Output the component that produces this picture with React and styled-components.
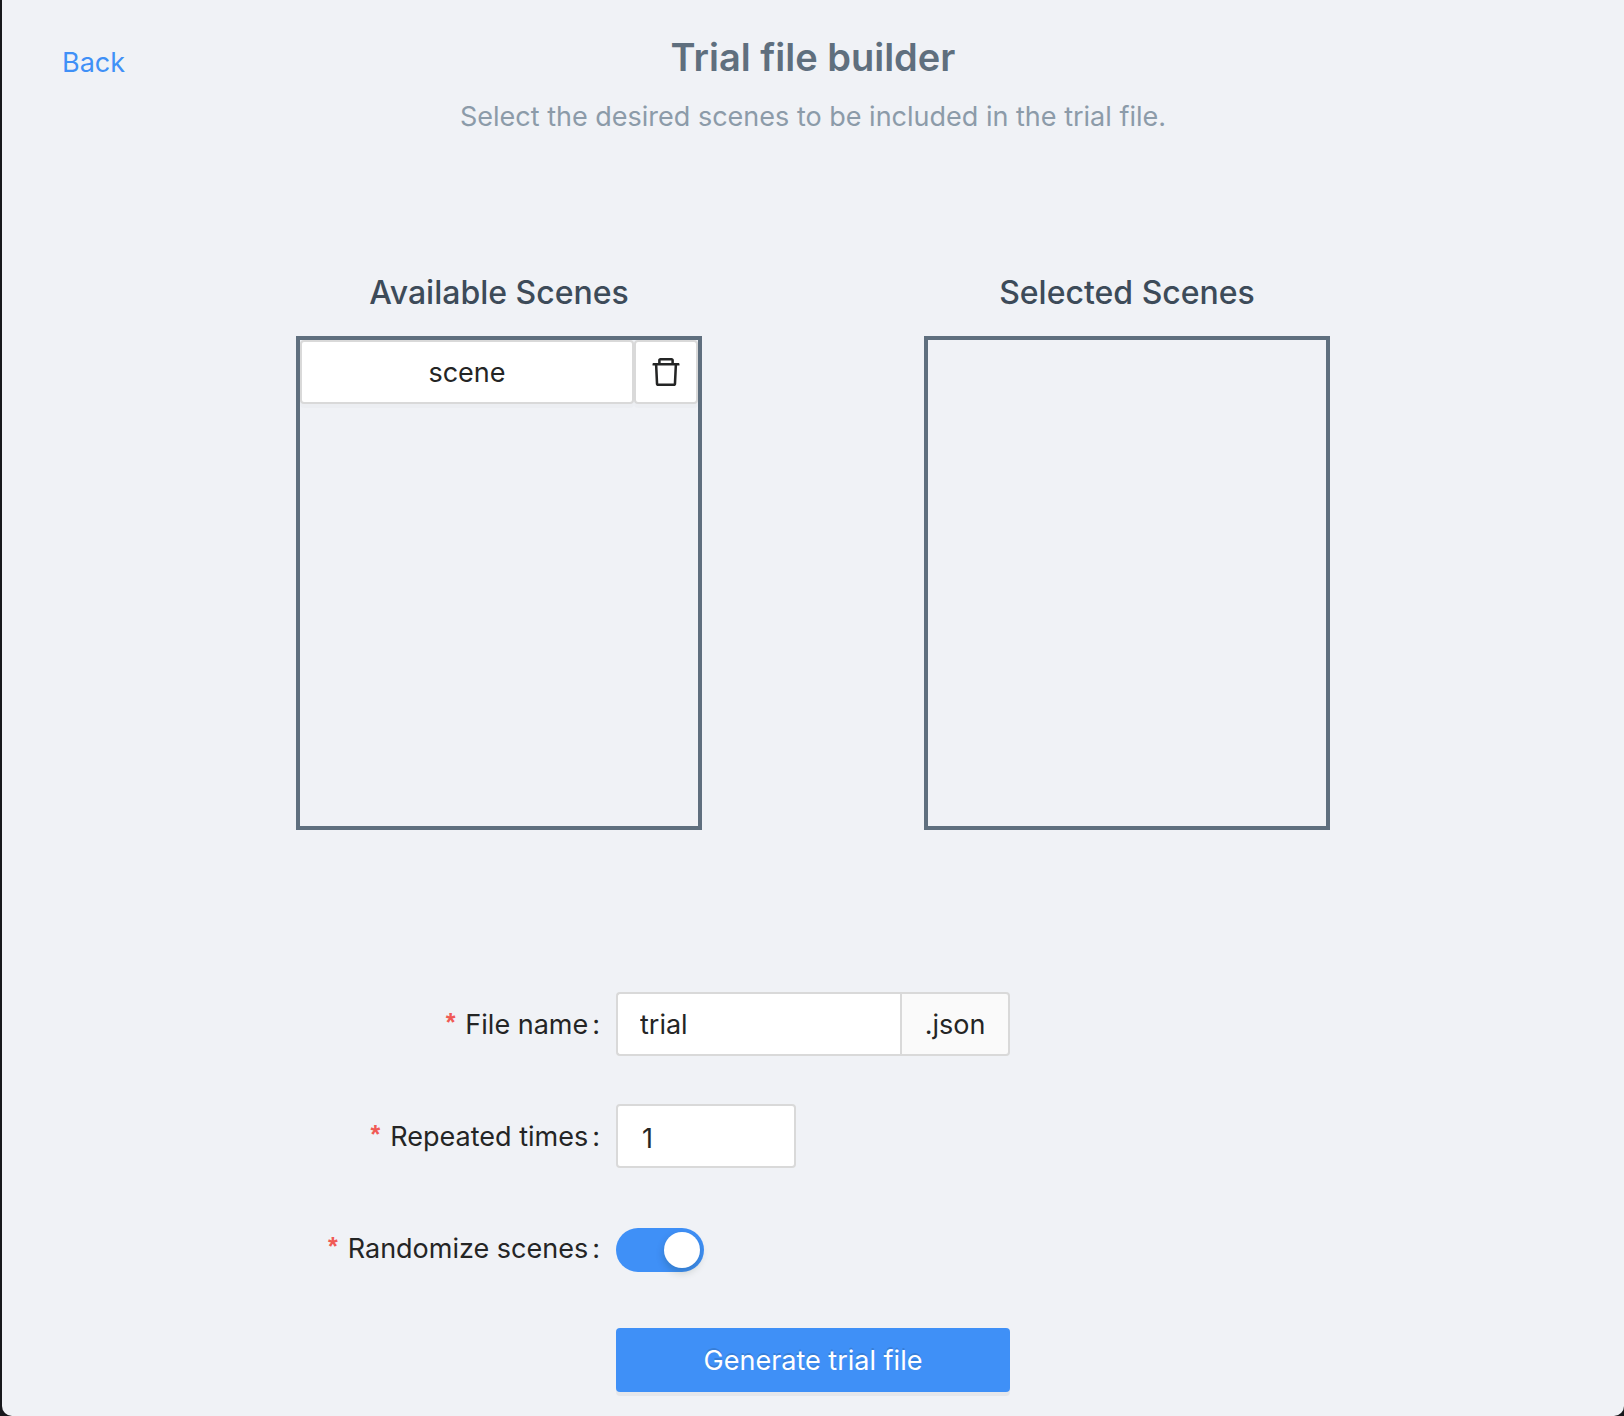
import React, { useState } from "react";
import styled, { createGlobalStyle } from "styled-components";
import { AiOutlineDelete } from "react-icons/ai";

const colors = {
  primary: "#3f90f7",
  slate: "#5f6f7e",
  heading: "#3d4b59",
  muted: "#8c9ba9",
  text: "#242525",
  border: "#d9d9d9",
  page: "#f0f2f6",
  required: "#f05a55",
};

const GlobalStyle = createGlobalStyle`
  *, *::before, *::after { box-sizing: border-box; }
  body {
    margin: 0;
    background: #17181c;
    color: ${colors.text};
    font-family: Inter, "Liberation Sans", sans-serif;
    font-size: 27px;
    line-height: 44px;
  }
  button, input { font: inherit; color: inherit; }
`;

const Page = styled.div`
  min-height: 100vh;
  margin-left: 2px;
  padding-bottom: 24px;
  background: ${colors.page};
  border-radius: 0 0 10px 10px;
`;

const Header = styled.header`
  display: grid;
  grid-template-columns: 1fr auto 1fr;
  padding: 32px 60px 0;
  text-align: center;
`;

const BackLink = styled.a`
  justify-self: start;
  padding-top: 9px;
  color: ${colors.primary};
  text-decoration: none;
`;

const Title = styled.h1`
  margin: 0;
  color: ${colors.slate};
  font-size: 38px;
  font-weight: 600;
  line-height: 50px;
`;

const Subtitle = styled.p`
  margin: 13px 0 0;
  color: ${colors.muted};
`;

const Columns = styled.main`
  display: flex;
  justify-content: center;
  gap: 222px;
  padding: 132px 24px 0;
`;

const Column = styled.section`
  flex: 0 1 406px;
`;

const ColumnTitle = styled.h2`
  margin: 0 0 21px;
  color: ${colors.heading};
  font-size: 32px;
  font-weight: 500;
  line-height: 44px;
  text-align: center;
`;

const SceneList = styled.ul`
  height: 494px;
  margin: 0;
  padding: 0;
  border: 4px solid ${colors.slate};
  list-style: none;
`;

const SceneItem = styled.li`
  display: flex;
`;

const SceneButton = styled.button`
  flex: 1;
  display: flex;
  align-items: center;
  justify-content: center;
  height: 64px;
  padding: 2px 0 0;
  border: 2px solid ${colors.border};
  border-radius: 4px;
  background: #fff;
  box-shadow: 0 4px 0 rgba(0, 0, 0, 0.016);
`;

const DeleteButton = styled(SceneButton)`
  flex: 0 0 64px;
  padding: 0;
`;

const Form = styled.form`
  display: grid;
  gap: 48px;
  padding-top: 162px;
`;

const Field = styled.div`
  display: grid;
  grid-template-columns: 1fr 394px 1fr;
  align-items: center;
  min-height: 64px;
`;

const Label = styled.label`
  padding: 2px 16px 0 0;
  text-align: right;

  &::before {
    content: "*";
    margin-right: 10px;
    color: ${colors.required};
    font-family: "Liberation Sans", sans-serif;
    font-size: 25px;
    font-weight: 700;
    line-height: 1;
    vertical-align: 3px;
  }

  &::after {
    content: ":";
    margin-left: 4px;
  }
`;

const InputGroup = styled.div`
  display: flex;
`;

const TextInput = styled.input`
  flex: 1;
  min-width: 0;
  height: 64px;
  padding: 0 22px;
  border: 2px solid ${colors.border};
  border-right-width: ${(p) => (p.$joined ? 0 : "2px")};
  border-radius: ${(p) => (p.$joined ? "4px 0 0 4px" : "4px")};
  background: #fff;
  outline: none;
`;

const CountInput = styled(TextInput)`
  flex: 0 0 180px;
  padding: 4px 24px 0;
`;

const Addon = styled.span`
  flex: 0 0 110px;
  height: 64px;
  border: 2px solid ${colors.border};
  border-radius: 0 4px 4px 0;
  background: #fafafa;
  line-height: 62px;
  text-align: center;
`;

const SwitchSlot = styled.div`
  padding-top: 4px;
`;

const Switch = styled.input`
  appearance: none;
  display: flex;
  align-items: center;
  justify-content: ${(p) => (p.checked ? "flex-end" : "flex-start")};
  width: 88px;
  height: 44px;
  margin: 0;
  padding: 4px;
  border-radius: 22px;
  background: ${(p) => (p.checked ? colors.primary : "#bfbfbf")};
  cursor: pointer;

  &::before {
    content: "";
    width: 36px;
    height: 36px;
    border-radius: 50%;
    background: #fff;
    box-shadow: 0 4px 8px rgba(0, 35, 11, 0.2);
  }
`;

const SubmitButton = styled.button`
  grid-column: 2;
  height: 64px;
  padding: 2px 0 0;
  border: 0;
  border-radius: 4px;
  background: ${colors.primary};
  color: #fff;
  box-shadow: 0 4px 0 rgba(0, 0, 0, 0.043);
  text-shadow: 0 -2px 0 rgba(0, 0, 0, 0.12);
`;

export default function App() {
  const [fileName, setFileName] = useState("trial");
  const [times, setTimes] = useState("1");
  const [randomize, setRandomize] = useState(true);

  return (
    <>
      <GlobalStyle />
      <Page>
        <Header>
          <BackLink href="#back">Back</BackLink>
          <div>
            <Title>Trial file builder</Title>
            <Subtitle>
              Select the desired scenes to be included in the trial file.
            </Subtitle>
          </div>
        </Header>
        <Columns>
          <Column>
            <ColumnTitle>Available Scenes</ColumnTitle>
            <SceneList>
              <SceneItem>
                <SceneButton type="button">scene</SceneButton>
                <DeleteButton type="button" aria-label="Delete scene">
                  <AiOutlineDelete size={36} />
                </DeleteButton>
              </SceneItem>
            </SceneList>
          </Column>
          <Column>
            <ColumnTitle>Selected Scenes</ColumnTitle>
            <SceneList />
          </Column>
        </Columns>
        <Form onSubmit={(e) => e.preventDefault()}>
          <Field>
            <Label htmlFor="file-name">File name</Label>
            <InputGroup>
              <TextInput
                id="file-name"
                $joined
                value={fileName}
                onChange={(e) => setFileName(e.target.value)}
              />
              <Addon>.json</Addon>
            </InputGroup>
          </Field>
          <Field>
            <Label htmlFor="times">Repeated times</Label>
            <InputGroup>
              <CountInput
                id="times"
                inputMode="numeric"
                value={times}
                onChange={(e) => setTimes(e.target.value)}
              />
            </InputGroup>
          </Field>
          <Field>
            <Label htmlFor="randomize">Randomize scenes</Label>
            <SwitchSlot>
              <Switch
                id="randomize"
                type="checkbox"
                role="switch"
                checked={randomize}
                onChange={(e) => setRandomize(e.target.checked)}
              />
            </SwitchSlot>
          </Field>
          <Field>
            <SubmitButton type="submit">Generate trial file</SubmitButton>
          </Field>
        </Form>
      </Page>
    </>
  );
}
